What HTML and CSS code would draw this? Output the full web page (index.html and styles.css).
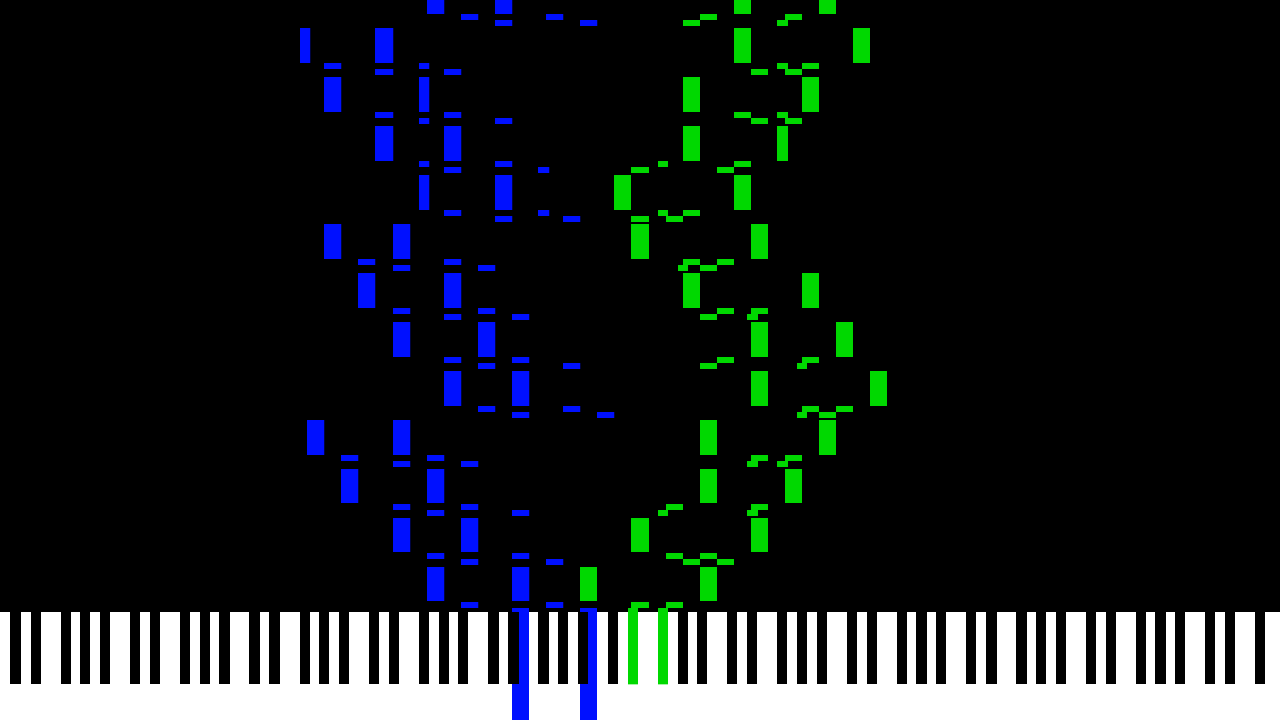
FILE: index.html
```html
<!DOCTYPE html>
<html lang="en">
<head>
    <meta charset="UTF-8">
    <meta name="viewport" content="width=device-width, initial-scale=1.0">
    <title>Piano Roll</title>
    <link rel="stylesheet" href="styles.css">
</head>
<body>

    <svg class="roll" width="1280" height="720" viewBox="0 0 1280 720">

        <!-- left hand -->
        <g class="left falling">
            <rect x="427" y="0" width="17" height="14"/>
            <rect x="495" y="0" width="17" height="14"/>
            <rect x="461" y="14" width="17" height="6"/>
            <rect x="546" y="14" width="17" height="6"/>
            <rect x="495" y="20" width="17" height="6"/>
            <rect x="580" y="20" width="17" height="6"/>

            <rect x="300" y="28" width="10" height="35"/>
            <rect x="375" y="28" width="18" height="35"/>
            <rect x="324" y="63" width="17" height="6"/>
            <rect x="419" y="63" width="10" height="6"/>
            <rect x="375" y="69" width="18" height="6"/>
            <rect x="444" y="69" width="17" height="6"/>

            <rect x="324" y="77" width="17" height="35"/>
            <rect x="419" y="77" width="10" height="35"/>
            <rect x="375" y="112" width="18" height="6"/>
            <rect x="444" y="112" width="17" height="6"/>
            <rect x="419" y="118" width="10" height="6"/>
            <rect x="495" y="118" width="17" height="6"/>

            <rect x="375" y="126" width="18" height="35"/>
            <rect x="444" y="126" width="17" height="35"/>
            <rect x="419" y="161" width="10" height="6"/>
            <rect x="495" y="161" width="17" height="6"/>
            <rect x="444" y="167" width="17" height="6"/>
            <rect x="538" y="167" width="11" height="6"/>

            <rect x="419" y="175" width="10" height="35"/>
            <rect x="495" y="175" width="17" height="35"/>
            <rect x="444" y="210" width="17" height="6"/>
            <rect x="538" y="210" width="11" height="6"/>
            <rect x="495" y="216" width="17" height="6"/>
            <rect x="563" y="216" width="17" height="6"/>

            <rect x="324" y="224" width="17" height="35"/>
            <rect x="393" y="224" width="17" height="35"/>
            <rect x="358" y="259" width="17" height="6"/>
            <rect x="444" y="259" width="17" height="6"/>
            <rect x="393" y="265" width="17" height="6"/>
            <rect x="478" y="265" width="17" height="6"/>

            <rect x="358" y="273" width="17" height="35"/>
            <rect x="444" y="273" width="17" height="35"/>
            <rect x="393" y="308" width="17" height="6"/>
            <rect x="478" y="308" width="17" height="6"/>
            <rect x="444" y="314" width="17" height="6"/>
            <rect x="512" y="314" width="17" height="6"/>

            <rect x="393" y="322" width="17" height="35"/>
            <rect x="478" y="322" width="17" height="35"/>
            <rect x="444" y="357" width="17" height="6"/>
            <rect x="512" y="357" width="17" height="6"/>
            <rect x="478" y="363" width="17" height="6"/>
            <rect x="563" y="363" width="17" height="6"/>

            <rect x="444" y="371" width="17" height="35"/>
            <rect x="512" y="371" width="17" height="35"/>
            <rect x="478" y="406" width="17" height="6"/>
            <rect x="563" y="406" width="17" height="6"/>
            <rect x="512" y="412" width="17" height="6"/>
            <rect x="597" y="412" width="17" height="6"/>

            <rect x="307" y="420" width="17" height="35"/>
            <rect x="393" y="420" width="17" height="35"/>
            <rect x="341" y="455" width="17" height="6"/>
            <rect x="427" y="455" width="17" height="6"/>
            <rect x="393" y="461" width="17" height="6"/>
            <rect x="461" y="461" width="17" height="6"/>

            <rect x="341" y="469" width="17" height="34"/>
            <rect x="427" y="469" width="17" height="34"/>
            <rect x="393" y="504" width="17" height="6"/>
            <rect x="461" y="504" width="17" height="6"/>
            <rect x="427" y="510" width="17" height="6"/>
            <rect x="512" y="510" width="17" height="6"/>

            <rect x="393" y="518" width="17" height="34"/>
            <rect x="461" y="518" width="17" height="34"/>
            <rect x="427" y="553" width="17" height="6"/>
            <rect x="512" y="553" width="17" height="6"/>
            <rect x="461" y="559" width="17" height="6"/>
            <rect x="546" y="559" width="17" height="6"/>

            <rect x="427" y="567" width="17" height="34"/>
            <rect x="512" y="567" width="17" height="34"/>
            <rect x="461" y="602" width="17" height="6"/>
            <rect x="546" y="602" width="17" height="6"/>
        </g>

        <!-- right hand -->
        <g class="right">
            <rect x="734" y="0" width="17" height="14"/>
            <rect x="819" y="0" width="17" height="14"/>
            <rect x="700" y="14" width="17" height="6"/>
            <rect x="785" y="14" width="17" height="6"/>
            <rect x="683" y="20" width="17" height="6"/>
            <rect x="777" y="20" width="11" height="6"/>

            <rect x="734" y="28" width="17" height="35"/>
            <rect x="853" y="28" width="17" height="35"/>
            <rect x="777" y="63" width="11" height="6"/>
            <rect x="802" y="63" width="17" height="6"/>
            <rect x="751" y="69" width="17" height="6"/>
            <rect x="785" y="69" width="17" height="6"/>

            <rect x="683" y="77" width="17" height="35"/>
            <rect x="802" y="77" width="17" height="35"/>
            <rect x="734" y="112" width="17" height="6"/>
            <rect x="777" y="112" width="11" height="6"/>
            <rect x="751" y="118" width="17" height="6"/>
            <rect x="785" y="118" width="17" height="6"/>

            <rect x="683" y="126" width="17" height="35"/>
            <rect x="777" y="126" width="11" height="35"/>
            <rect x="658" y="161" width="10" height="6"/>
            <rect x="734" y="161" width="17" height="6"/>
            <rect x="631" y="167" width="18" height="6"/>
            <rect x="717" y="167" width="17" height="6"/>

            <rect x="614" y="175" width="17" height="35"/>
            <rect x="734" y="175" width="17" height="35"/>
            <rect x="658" y="210" width="10" height="6"/>
            <rect x="683" y="210" width="17" height="6"/>
            <rect x="631" y="216" width="18" height="6"/>
            <rect x="666" y="216" width="17" height="6"/>

            <rect x="631" y="224" width="18" height="35"/>
            <rect x="751" y="224" width="17" height="35"/>
            <rect x="683" y="259" width="17" height="6"/>
            <rect x="717" y="259" width="17" height="6"/>
            <rect x="678" y="265" width="10" height="6"/>
            <rect x="700" y="265" width="17" height="6"/>

            <rect x="683" y="273" width="17" height="35"/>
            <rect x="802" y="273" width="17" height="35"/>
            <rect x="717" y="308" width="17" height="6"/>
            <rect x="751" y="308" width="17" height="6"/>
            <rect x="700" y="314" width="17" height="6"/>
            <rect x="747" y="314" width="11" height="6"/>

            <rect x="751" y="322" width="17" height="35"/>
            <rect x="836" y="322" width="17" height="35"/>
            <rect x="717" y="357" width="17" height="6"/>
            <rect x="802" y="357" width="17" height="6"/>
            <rect x="700" y="363" width="17" height="6"/>
            <rect x="797" y="363" width="10" height="6"/>

            <rect x="751" y="371" width="17" height="35"/>
            <rect x="870" y="371" width="17" height="35"/>
            <rect x="802" y="406" width="17" height="6"/>
            <rect x="836" y="406" width="17" height="6"/>
            <rect x="797" y="412" width="10" height="6"/>
            <rect x="819" y="412" width="17" height="6"/>

            <rect x="700" y="420" width="17" height="35"/>
            <rect x="819" y="420" width="17" height="35"/>
            <rect x="751" y="455" width="17" height="6"/>
            <rect x="785" y="455" width="17" height="6"/>
            <rect x="747" y="461" width="11" height="6"/>
            <rect x="777" y="461" width="11" height="6"/>

            <rect x="700" y="469" width="17" height="34"/>
            <rect x="785" y="469" width="17" height="34"/>
            <rect x="666" y="504" width="17" height="6"/>
            <rect x="751" y="504" width="17" height="6"/>
            <rect x="658" y="510" width="10" height="6"/>
            <rect x="747" y="510" width="11" height="6"/>

            <rect x="631" y="518" width="18" height="34"/>
            <rect x="751" y="518" width="17" height="34"/>
            <rect x="666" y="553" width="17" height="6"/>
            <rect x="700" y="553" width="17" height="6"/>
            <rect x="683" y="559" width="17" height="6"/>
            <rect x="717" y="559" width="17" height="6"/>

            <rect x="580" y="567" width="17" height="34"/>
            <rect x="700" y="567" width="17" height="34"/>
            <rect x="631" y="602" width="18" height="6"/>
            <rect x="666" y="602" width="17" height="6"/>
        </g>

        <!-- white keys -->
        <rect class="white-keys" x="0" y="612" width="1280" height="108"/>

        <!-- held white keys -->
        <g class="left">
            <rect x="512" y="608" width="17" height="112"/>
            <rect x="580" y="608" width="17" height="112"/>
        </g>

        <!-- black keys -->
        <g class="black-keys">
            <rect x="10" y="612" width="11" height="72"/>
            <rect x="31" y="612" width="10" height="72"/>
            <rect x="61" y="612" width="10" height="72"/>
            <rect x="80" y="612" width="10" height="72"/>
            <rect x="100" y="612" width="10" height="72"/>
            <rect x="130" y="612" width="10" height="72"/>
            <rect x="150" y="612" width="10" height="72"/>
            <rect x="180" y="612" width="10" height="72"/>
            <rect x="200" y="612" width="10" height="72"/>
            <rect x="219" y="612" width="11" height="72"/>
            <rect x="249" y="612" width="11" height="72"/>
            <rect x="269" y="612" width="11" height="72"/>
            <rect x="300" y="612" width="10" height="72"/>
            <rect x="319" y="612" width="10" height="72"/>
            <rect x="339" y="612" width="10" height="72"/>
            <rect x="369" y="612" width="10" height="72"/>
            <rect x="389" y="612" width="10" height="72"/>
            <rect x="419" y="612" width="10" height="72"/>
            <rect x="439" y="612" width="10" height="72"/>
            <rect x="458" y="612" width="10" height="72"/>
            <rect x="488" y="612" width="11" height="72"/>
            <rect x="508" y="612" width="11" height="72"/>
            <rect x="538" y="612" width="11" height="72"/>
            <rect x="558" y="612" width="10" height="72"/>
            <rect x="578" y="612" width="10" height="72"/>
            <rect x="608" y="612" width="10" height="72"/>
            <rect x="678" y="612" width="10" height="72"/>
            <rect x="697" y="612" width="10" height="72"/>
            <rect x="727" y="612" width="10" height="72"/>
            <rect x="747" y="612" width="10" height="72"/>
            <rect x="777" y="612" width="10" height="72"/>
            <rect x="797" y="612" width="10" height="72"/>
            <rect x="817" y="612" width="10" height="72"/>
            <rect x="847" y="612" width="10" height="72"/>
            <rect x="867" y="612" width="10" height="72"/>
            <rect x="897" y="612" width="10" height="72"/>
            <rect x="916" y="612" width="11" height="72"/>
            <rect x="936" y="612" width="10" height="72"/>
            <rect x="966" y="612" width="10" height="72"/>
            <rect x="986" y="612" width="11" height="72"/>
            <rect x="1016" y="612" width="11" height="72"/>
            <rect x="1036" y="612" width="10" height="72"/>
            <rect x="1056" y="612" width="10" height="72"/>
            <rect x="1086" y="612" width="10" height="72"/>
            <rect x="1106" y="612" width="10" height="72"/>
            <rect x="1136" y="612" width="10" height="72"/>
            <rect x="1155" y="612" width="11" height="72"/>
            <rect x="1175" y="612" width="10" height="72"/>
            <rect x="1205" y="612" width="10" height="72"/>
            <rect x="1225" y="612" width="10" height="72"/>
            <rect x="1255" y="612" width="10" height="72"/>
        </g>

        <!-- held black keys -->
        <g class="right">
            <rect x="628" y="608" width="10" height="76"/>
            <rect x="658" y="608" width="10" height="76"/>
            <rect class="key-edge" x="628" y="684" width="10" height="1"/>
            <rect class="key-edge" x="658" y="684" width="10" height="1"/>
        </g>

    </svg>

</body>
</html>
```

FILE: styles.css
```css
body {
    margin: 0;
    background: #000;
    overflow: hidden;
}
.roll {
    display: block;
    shape-rendering: crispEdges;
}
.left {
    fill: #0010ff;
}
.falling {
    filter: drop-shadow(1px 0 0 rgba(0, 16, 255, 0.25));
}
.right {
    fill: #00d800;
}
.key-edge {
    opacity: 0.35;
}
.white-keys {
    fill: #fff;
}
.black-keys {
    fill: #000;
}
```
